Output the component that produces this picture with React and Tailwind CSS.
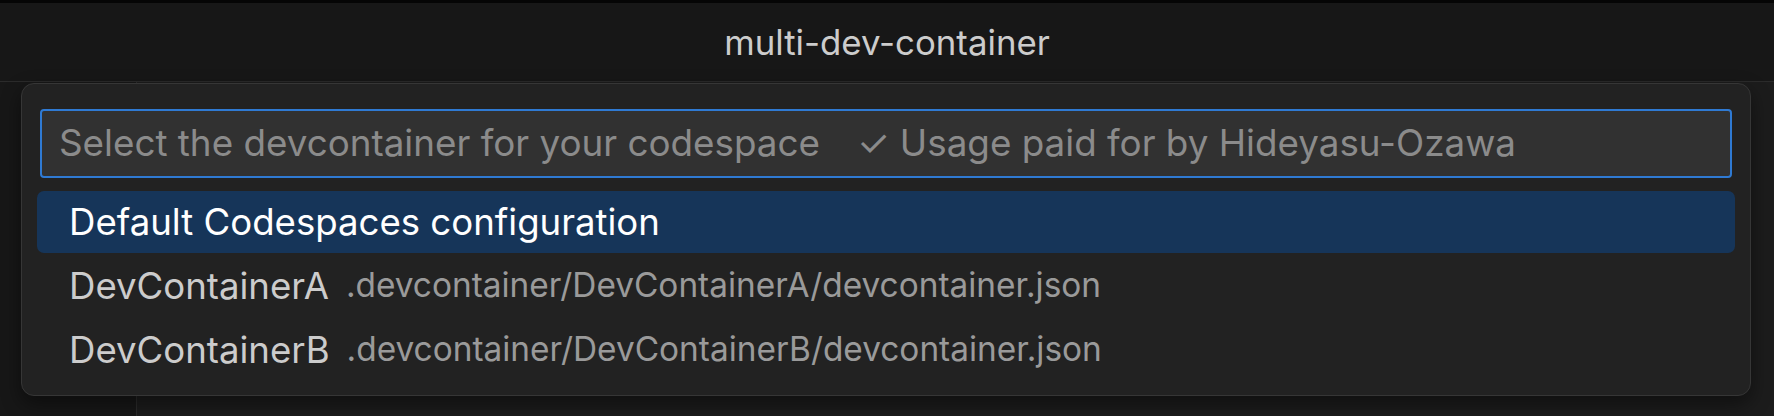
import React from 'react';

const items = [
  { label: 'Default Codespaces configuration', desc: '', active: true },
  { label: 'DevContainerA', desc: '.devcontainer/DevContainerA/devcontainer.json' },
  { label: 'DevContainerB', desc: '.devcontainer/DevContainerB/devcontainer.json' },
];

const QuickPickRow = ({ item }) => (
  <div className="h-[64px] py-[1px]">
    <div
      className={
        item.active
          ? 'h-full flex items-center pl-[32px] rounded-[7px] bg-[#163559] text-white'
          : 'h-full flex items-center pl-[32px] rounded-[7px] text-[#cccccc]'
      }
    >
      <span className="text-[36.6px] leading-none">{item.label}</span>
      {item.desc && (
        <span className="ml-[17px] text-[33.4px] leading-none text-[#9a9a9a]">{item.desc}</span>
      )}
    </div>
  </div>
);

const App = () => {
  return (
    <div
      className="w-[1774px] h-[416px] flex flex-col bg-[#161616] overflow-hidden"
      style={{ fontFamily: 'Inter, "Noto Sans", sans-serif' }}
    >
      {/* title bar */}
      <div className="h-[82px] shrink-0 border-t-[3px] border-t-[#050505] border-b border-b-[#2b2b2b] bg-[#171717] flex items-center justify-center">
        <span className="text-[34.8px] leading-none text-[#cccccc]">multi-dev-container</span>
      </div>

      {/* workbench behind the quick pick */}
      <div className="relative flex-1 flex">
        <div className="w-[137px] bg-[#171717] border-r border-[#2b2b2b]"></div>
        <div className="flex-1 bg-[#1c1c1c]"></div>

        {/* quick pick */}
        <div className="absolute left-[21px] top-[1px] w-[1730px] h-[313px] rounded-[13px] border border-[#363636] bg-[#222222] shadow-[0_8px_20px_rgba(0,0,0,0.45)] px-[15px] pt-[25px]">
          <div className="mx-[3px] h-[69px] rounded-[4px] border-2 border-[#2f7ad3] bg-[#313131] flex items-center pl-[17px] text-[36.8px] leading-none text-[#8b8b8b]">
            <span>Select the devcontainer for your codespace</span>
            <span className="ml-[37px]">✓ Usage paid for by Hideyasu-Ozawa</span>
          </div>
          <div className="mt-[12px]">
            {items.map((item) => (
              <QuickPickRow key={item.label} item={item} />
            ))}
          </div>
        </div>
      </div>
    </div>
  );
};

export default App;
